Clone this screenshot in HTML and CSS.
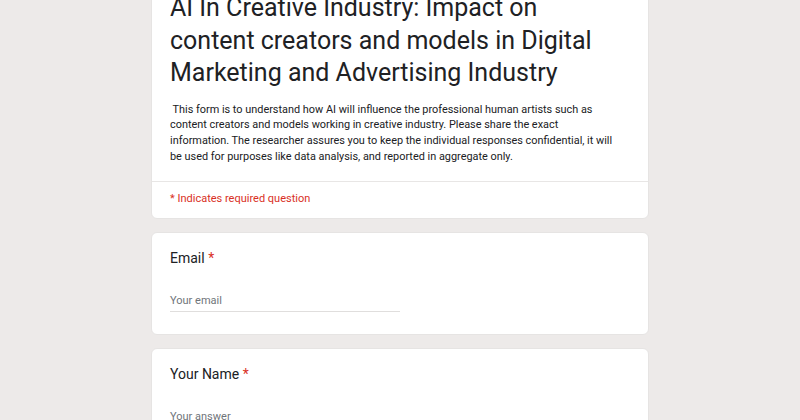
FILE: index.html
```html
<!DOCTYPE html>
<html>
<head>
<meta charset="utf-8">
<link rel="stylesheet" href="styles.css">
</head>
<body>
<div class="page">
  <div class="card head">
    <div class="head-main">
      <h1 class="title">AI In Creative Industry: Impact on<br>content creators and models in Digital<br>Marketing and Advertising Industry</h1>
      <p class="desc"> This form is to understand how AI will influence the professional human artists such as<br>content creators and models working in creative industry. Please share the exact<br>information. The researcher assures you to keep the individual responses confidential, it will<br>be used for purposes like data analysis, and reported in aggregate only.</p>
    </div>
    <div class="req">* Indicates required question</div>
  </div>
  <div class="card q">
    <div class="label">Email <span class="star">*</span></div>
    <div class="input">Your email</div>
  </div>
  <div class="card q">
    <div class="label">Your Name <span class="star">*</span></div>
    <div class="input">Your answer</div>
  </div>
</div>
</body>
</html>
```
FILE: styles.css
```css
html, body {
  margin: 0;
  padding: 0;
  background: #edeae9;
  overflow: hidden;
}
body {
  font-family: Roboto, "Noto Sans", sans-serif;
  color: #202124;
}
.page {
  width: 498px;
  margin: 0 auto;
  display: flex;
  flex-direction: column;
  gap: 13px;
  margin-top: -40px;
}
.card {
  background: #fff;
  border: 1px solid #e6e4e3;
  border-radius: 6px;
}
.head-main {
  padding: 31px 18px 17px 18px;
}
.title {
  margin: 0;
  font-weight: 400;
  font-size: 25px;
  line-height: 32.5px;
  color: #202124;
  white-space: nowrap;
}
.desc {
  margin: 12px 0 0 0;
  font-size: 10.9px;
  line-height: 15.7px;
  color: #202124;
  white-space: pre;
}
.req {
  border-top: 1px solid #e8e6e5;
  padding: 9px 18px 12px 18px;
  font-size: 11px;
  line-height: 15px;
  color: #d93025;
}
.q {
  padding: 15px 18px 22px 18px;
}
.label {
  font-size: 14px;
  line-height: 20px;
  color: #202124;
}
.star {
  color: #d93025;
}
.input {
  margin-top: 25px;
  width: 230px;
  font-size: 11px;
  line-height: 16px;
  color: #70757a;
  padding-bottom: 2px;
  border-bottom: 1px solid #e0dedd;
}
```
